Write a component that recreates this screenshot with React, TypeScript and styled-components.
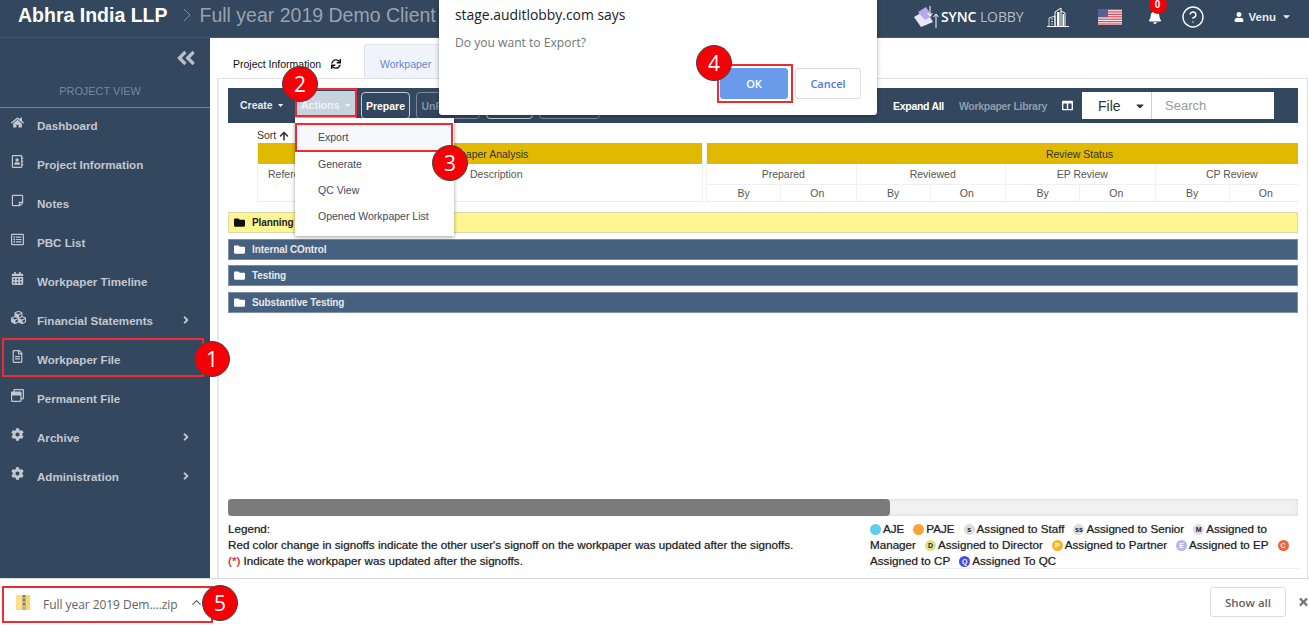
import React from "react";
import styled, {createGlobalStyle} from "styled-components";
import {
	FaAngleDoubleLeft, FaAngleRight, FaArrowUp, FaBell, FaCalendarAlt, FaCaretDown, FaCog, FaColumns, FaCubes, FaFolder,
	FaHome, FaRegAddressBook, FaRegFileAlt, FaRegListAlt, FaRegStickyNote, FaRegWindowRestore, FaSync, FaTimes, FaUser,
} from "react-icons/fa";
import {FiChevronRight, FiChevronUp, FiHelpCircle} from "react-icons/fi";

const NAVY = "#33475e";
const GOLD = "#e0b900";

const GlobalStyle = createGlobalStyle`
    html, body {
        margin: 0;
        padding: 0;
        background: white;
        overflow: hidden;
    }
    * {
        box-sizing: border-box;
    }
`
const Page = styled.div`
    position: relative;
    width: 1309px;
    height: 625px;
    overflow: hidden;
    display: flex;
    flex-direction: column;
    font-family: 'Liberation Sans', Arial, sans-serif;
    background: white;
`

/* top bar */
const Header = styled.header`
    height: 38px;
    flex: none;
    background: ${NAVY};
    border-bottom: 1px solid #46586e;
    display: flex;
    align-items: center;
    padding-left: 18px;
    color: white;
`
const Company = styled.div`
    font-size: 19.5px;
    font-weight: 700;
    white-space: nowrap;
    margin-top: -7px;
`
const Crumb = styled.div`
    font-size: 19.5px;
    color: #98a3b0;
    white-space: nowrap;
    margin: -7px 0 0 7px;
    display: flex;
    align-items: center;
    gap: 1px;
`
const HeaderRight = styled.div`
    margin-left: auto;
    display: flex;
    align-items: center;
    padding-right: 17px;
    height: 100%;
    margin-top: -4px;
`
const SyncLogo = styled.div`
    display: flex;
    align-items: center;
    margin-right: 22px;
`
const SyncText = styled.span`
    font-family: 'Open Sans', sans-serif;
    font-size: 14px;
    font-weight: 600;
    color: white;
    letter-spacing: -0.1px;
    & > span {
        font-weight: 400;
        color: #b7bec8;
    }
`
const HeaderIcon = styled.div<{ $gap: number }>`
    position: relative;
    display: flex;
    align-items: center;
    margin-right: ${props => props.$gap}px;
`
const BellBadge = styled.span`
    position: absolute;
    top: -14px;
    left: 1px;
    width: 18px;
    height: 18px;
    border-radius: 50%;
    background: #f00008;
    color: white;
    font-size: 10px;
    font-weight: 700;
    display: flex;
    align-items: center;
    justify-content: center;
`
const UserMenu = styled.div`
    display: flex;
    align-items: center;
    gap: 5px;
    font-size: 11.5px;
    font-weight: 700;
    color: #e8ebee;
`

/* page body */
const Body = styled.div`
    flex: 1;
    min-height: 0;
    display: flex;
`
const Sidebar = styled.aside`
    width: 210px;
    flex: none;
    background: ${NAVY};
    color: #c3c8cf;
`
const Collapse = styled.div`
    height: 40px;
    display: flex;
    justify-content: flex-end;
    align-items: center;
    padding: 0 13px 0 0;
    color: #b8bfc8;
    font-size: 22px;
`
const SideTitle = styled.div`
    height: 30px;
    padding: 7px 10px 0 0;
    border-bottom: 1px solid #6f8197;
    text-align: center;
    font-size: 10.9px;
    color: #74879e;
`
const NavList = styled.nav`
    display: flex;
    flex-direction: column;
`
const NavItem = styled.div`
    height: 39px;
    flex: none;
    display: flex;
    align-items: center;
    font-size: 11.6px;
    font-weight: 700;
    padding: 0 18px 5px 10px;
`
const NavIcon = styled.span`
    width: 27px;
    flex: none;
    font-size: 13px;
    display: flex;
    margin-top: -5px;
    padding-left: 1px;
`
const NavArrow = styled(FaAngleRight)`
    margin-left: auto;
    font-size: 12px;
`

/* content */
const Main = styled.main`
    flex: 1;
    min-width: 0;
    padding: 5px 1px 0 7px;
    display: flex;
    flex-direction: column;
`
const Tabs = styled.div`
    display: flex;
    height: 35px;
    flex: none;
    align-items: flex-end;
    padding-left: 1px;
`
const Tab = styled.div<{ $active?: boolean }>`
    height: ${props => props.$active ? 34 : 30}px;
    width: ${props => props.$active ? 79 : 146}px;
    display: flex;
    align-items: center;
    gap: 10px;
    font-size: 10.5px;
    padding: ${props => props.$active ? 4 : 2}px 0 0 15px;
    color: ${props => props.$active ? "#6685d6" : "#111"};
    background: ${props => props.$active ? "#f0f4fa" : "white"};
    border: ${props => props.$active ? "1px solid #dde3ea" : "none"};
    border-bottom: none;
    border-radius: 3px 3px 0 0;
    white-space: nowrap;
`
const Panel = styled.section`
    flex: 1;
    min-height: 0;
    border: 1px solid #dfe3e8;
    border-left: 2px solid #e4e9f1;
    border-bottom: none;
    padding: 9px 9px 0 9px;
    display: flex;
    flex-direction: column;
`
const Toolbar = styled.div`
    height: 35px;
    flex: none;
    background: ${NAVY};
    display: flex;
    align-items: center;
    padding-left: 13px;
    font-size: 10.5px;
    font-weight: 700;
    color: #e9ecef;
`
const ToolMenu = styled.div<{ $open?: boolean }>`
    height: 28px;
    margin-top: -1px;
    display: flex;
    align-items: center;
    gap: 5px;
    padding: 0 6px;
    width: ${props => props.$open ? 61 : 55}px;
    margin-left: ${props => props.$open ? 0 : -7}px;
    margin-right: ${props => props.$open ? 5 : 6}px;
    background: ${props => props.$open ? "#c7d2df" : "transparent"};
    color: ${props => props.$open ? "#eef2f6" : "#e9ecef"};
`
const ToolButton = styled.div<{ $width: number; $faded?: boolean }>`
    width: ${props => props.$width}px;
    height: 27px;
    margin-right: 6px;
    border: 1px solid ${props => props.$faded ? "#7c8a9b" : "#c2cad3"};
    border-radius: 4px;
    color: ${props => props.$faded ? "#8491a1" : "white"};
    display: flex;
    align-items: center;
    justify-content: center;
    overflow: hidden;
    white-space: nowrap;
`
const ToolRight = styled.div`
    margin-left: auto;
    display: flex;
    align-items: center;
    padding-right: 24px;
`
const ToolLink = styled.span<{ $muted?: boolean; $gap: number }>`
    color: ${props => props.$muted ? "#8f9cac" : "white"};
    margin-right: ${props => props.$gap}px;
    white-space: nowrap;
    letter-spacing: -0.3px;
`
const ColumnsIcon = styled(FaColumns)`
    color: white;
    font-size: 11px;
    margin-right: 9px;
`
const FileSelect = styled.div`
    width: 70px;
    height: 27px;
    background: white;
    color: #333;
    font-size: 14px;
    font-weight: 400;
    display: flex;
    align-items: center;
    justify-content: space-between;
    padding: 0 5px 0 16px;
    border-right: 1px solid #c7d2df;
`
const SearchBox = styled.div`
    width: 122px;
    height: 27px;
    background: white;
    color: #9a9a9a;
    font-size: 13px;
    font-weight: 400;
    display: flex;
    align-items: center;
    padding-left: 13px;
`

const SortRow = styled.div`
    height: 20px;
    flex: none;
    display: flex;
    align-items: flex-end;
    gap: 3px;
    padding: 0 0 2px 29px;
    font-size: 10.5px;
    color: #333;
`
const Columns = styled.div`
    display: flex;
    gap: 3px;
    padding-left: 29px;
    flex: none;
    height: 59px;
    color: #555;
    font-size: 10.5px;
`
const LeftGroup = styled.div`
    width: 446px;
    border-left: 1px solid #eef0f3;
    border-right: 1px solid #eef0f3;
    border-bottom: 1px solid #e9ecef;
`
const RightGroup = styled.div`
    flex: 1;
    min-width: 0;
    overflow: hidden;
    border-bottom: 1px solid #e9ecef;
    border-left: 1px solid #eef0f3;
`
const GoldBar = styled.div<{ $width?: number; $nudge?: number }>`
    height: 21px;
    width: ${props => props.$width ? `${props.$width}px` : "auto"};
    background: ${GOLD};
    color: #333;
    display: flex;
    align-items: center;
    justify-content: center;
    padding-left: ${props => props.$nudge ?? 0}px;
`
const LeftCells = styled.div`
    display: grid;
    grid-template-columns: 202px 1fr;
    padding: 4px 0 0 10px;
`
const ReviewGrid = styled.div`
    display: grid;
    grid-template-columns: repeat(4, 149.5px);
`
const ReviewCol = styled.div`
    border-right: 1px solid #eef0f3;
    text-align: center;
`
const ReviewTitle = styled.div`
    height: 21px;
    line-height: 21px;
    padding-left: 4px;
    border-bottom: 1px solid #eef0f3;
`
const ReviewSplit = styled.div`
    display: grid;
    grid-template-columns: 1fr 1fr;
    height: 16px;
    line-height: 17px;
    & > span:first-child {
        border-right: 1px solid #eef0f3;
    }
    & > span:last-child {
        padding-right: 2px;
    }
`
const Rows = styled.div`
    margin-top: 10px;
    display: flex;
    flex-direction: column;
    gap: 5.5px;
    flex: none;
`
const FolderRow = styled.div<{ $highlight?: boolean }>`
    height: 21px;
    display: flex;
    align-items: center;
    gap: 7px;
    padding-left: 5px;
    font-size: 10px;
    font-weight: 700;
    letter-spacing: -0.1px;
    border: 1px solid ${props => props.$highlight ? "#d9d9b0" : "#7d8ea3"};
    background: ${props => props.$highlight ? "#fff68f" : "#46607f"};
    color: ${props => props.$highlight ? "#222" : "#e6e9ed"};
`
const Scrollbar = styled.div`
    margin-top: auto;
    height: 17px;
    flex: none;
    background: #f1f1f1;
    box-shadow: inset 0 0 3px #ccc;
`
const ScrollThumb = styled.div`
    width: 662px;
    height: 100%;
    background: #7b7b7b;
    border-radius: 4px;
`
const Legend = styled.div`
    display: flex;
    flex: none;
    height: 62px;
    padding-top: 5px;
    font-size: 11.65px;
    line-height: 16px;
    color: #222;
    text-shadow: 0 0 1px rgba(0, 0, 0, 0.45);
`
const LegendLeft = styled.div`
    width: 642px;
    flex: none;
    white-space: nowrap;
`
const LegendRight = styled.div`
    flex: 1;
    border-bottom: 1px solid #eef1f5;
    height: 48px;
    padding-right: 8px;
`
const LegendLine = styled.div`
    display: block;
    white-space: nowrap;
`
const Star = styled.span`
    color: #f0141e;
`
const Key = styled.span<{ $bg: string; $fg?: string; $first?: boolean }>`
    display: inline-block;
    overflow: hidden;
    width: 11px;
    height: 11px;
    border-radius: 50%;
    background: ${props => props.$bg};
    color: ${props => props.$fg ?? "#222"};
    font-size: 7px;
    font-weight: 700;
    line-height: 11px;
    text-align: center;
    text-shadow: none;
    vertical-align: -2px;
    margin: 0 2px 0 ${props => props.$first ? 0 : 9}px;
`

/* downloads */
const DownloadBar = styled.footer`
    height: 47px;
    flex: none;
    border-top: 1px solid #d8d8d8;
    display: flex;
    align-items: center;
    padding: 0 0 0 16px;
    font-family: 'Open Sans', sans-serif;
    font-size: 12px;
    color: #5f6368;
`
const FileName = styled.span`
    margin-left: 12px;
    margin-top: 5px;
    letter-spacing: -0.05px;
`
const ChevronUp = styled(FiChevronUp)`
    margin-left: 11px;
    font-size: 15px;
`
const ShowAll = styled.div`
    margin-left: auto;
    width: 76px;
    height: 30px;
    border: 1px solid #dadce0;
    border-radius: 3px;
    display: flex;
    align-items: center;
    justify-content: center;
    font-size: 11.5px;
    font-weight: 600;
`
const CloseBtn = styled(FaTimes)`
    margin-left: 12px;
    width: 11px;
    font-size: 12px;
    color: #70757a;
    flex: none;
`

/* overlays */
const Dialog = styled.div`
    position: absolute;
    left: 439px;
    top: 0;
    width: 438px;
    height: 115px;
    background: white;
    border-radius: 0 0 3px 3px;
    box-shadow: 0 1px 4px rgba(0, 0, 0, 0.35);
    padding: 6px 16px;
    font-family: 'Open Sans', sans-serif;
`
const DialogTitle = styled.div`
    font-size: 13.9px;
    line-height: 18px;
    color: #202124;
`
const DialogText = styled.div`
    margin-top: 11px;
    font-size: 12.1px;
    line-height: 16px;
    color: #70757a;
`
const DialogActions = styled.div`
    position: absolute;
    right: 16px;
    bottom: 16px;
    display: flex;
    gap: 7px;
`
const DialogButton = styled.div<{ $primary?: boolean }>`
    width: ${props => props.$primary ? 68 : 66}px;
    height: 31px;
    border-radius: 3px;
    background: ${props => props.$primary ? "#6a9bea" : "white"};
    color: ${props => props.$primary ? "white" : "#4a7ae0"};
    border: 1px solid ${props => props.$primary ? "#6a9bea" : "#dadce0"};
    font-size: 11px;
    font-weight: 600;
    display: flex;
    align-items: center;
    justify-content: center;
`
const Dropdown = styled.div`
    position: absolute;
    left: 295px;
    top: 118px;
    width: 159px;
    height: 118px;
    background: white;
    box-shadow: 0 1px 4px rgba(0, 0, 0, 0.4);
    padding-top: 6px;
    font-size: 10.5px;
    color: #3d4a5c;
`
const DropdownItem = styled.div<{ $active?: boolean }>`
    height: 26.4px;
    display: flex;
    align-items: center;
    padding-left: 23px;
    background: ${props => props.$active ? "#f7f8fb" : "white"};
`
const Highlight = styled.div<{ $x: number; $y: number; $w: number; $h: number }>`
    position: absolute;
    left: ${props => props.$x}px;
    top: ${props => props.$y}px;
    width: ${props => props.$w}px;
    height: ${props => props.$h}px;
    border: 2px solid #ee2a33;
    pointer-events: none;
`
const Marker = styled.div<{ $x: number; $y: number }>`
    position: absolute;
    left: ${props => props.$x}px;
    top: ${props => props.$y}px;
    width: 36px;
    height: 36px;
    border-radius: 50%;
    background: #f50006;
    border: 1px solid #444;
    color: white;
    font-family: 'Open Sans', sans-serif;
    font-size: 21px;
    display: flex;
    align-items: center;
    justify-content: center;
`

const navItems = [
	{label: "Dashboard", icon: <FaHome/>},
	{label: "Project Information", icon: <FaRegAddressBook/>},
	{label: "Notes", icon: <FaRegStickyNote/>},
	{label: "PBC List", icon: <FaRegListAlt/>},
	{label: "Workpaper Timeline", icon: <FaCalendarAlt/>},
	{label: "Financial Statements", icon: <FaCubes size={15}/>, arrow: true},
	{label: "Workpaper File", icon: <FaRegFileAlt/>},
	{label: "Permanent File", icon: <FaRegWindowRestore/>},
	{label: "Archive", icon: <FaCog/>, arrow: true},
	{label: "Administration", icon: <FaCog/>, arrow: true},
]

const reviews = ["Prepared", "Reviewed", "EP Review", "CP Review"]
const folders = ["Internal COntrol", "Testing", "Substantive Testing"]
const actions = ["Export", "Generate", "QC View", "Opened Workpaper List"]

const SyncIcon = () => (
	<svg width="28" height="24" viewBox="0 0 28 24">
		<polygon points="1,12 13,5 20,17 8,22" fill="#e9e6fa"/>
		<polygon points="5,7 13,2 19,11 12,15" fill="#b5a9ec"/>
		<path d="M17 1v10M14.500 8l2.500 3 2.500-3" stroke="white" strokeWidth="1" fill="none"/>
		<path d="M23 23V9M20.500 12L23 9l2.500 3" stroke="white" strokeWidth="1" fill="none"/>
	</svg>
)

const BuildingIcon = () => (
	<svg width="24" height="22" viewBox="0 0 24 22" fill="none" stroke="white">
		<path d="M1 20.500h22" strokeWidth="1"/>
		<path d="M3 20v-8l6-2v10M5 13h2M5 15.500h2M5 18h2" strokeWidth="0.8"/>
		<path d="M9 20V6l6-4v18" strokeWidth="1"/>
		<rect x="11" y="6" width="2.500" height="14" fill="white" stroke="none"/>
		<path d="M15 5l4 2v13" strokeWidth="1"/>
		<rect x="16.500" y="8" width="1.500" height="12" fill="white" stroke="none"/>
	</svg>
)

const FlagIcon = () => (
	<svg width="24" height="16" viewBox="0 0 24 16">
		<rect width="24" height="16" fill="#f2f2f2"/>
		{[0, 1, 2, 3, 4, 5, 6].map(i => <rect key={i} y={i * 2.4} width="24" height="1.2" fill="#d8485a"/>)}
		<rect width="10" height="8" fill="#5a5f93"/>
	</svg>
)

const ZipIcon = () => (
	<svg width="15" height="17" viewBox="0 0 15 17">
		<path d="M0 1h14v15H0z" fill="#f6d66e"/>
		<path d="M0 1h9v15H0z" fill="#f9e08c"/>
		<path d="M6 1h4v15H6z" fill="#c9b67a"/>
		<path d="M7 1h2v2H7zM7 5h2v2H7zM7 9h2v2H7z" fill="#6f7480"/>
	</svg>
)

const App = () => (
	<Page>
		<GlobalStyle/>
		<Header>
			<Company>Abhra India LLP</Company>
			<Crumb><FiChevronRight size={24} color="#7f8b99" strokeWidth={1}/>Full year 2019 Demo Client</Crumb>
			<HeaderRight>
				<SyncLogo>
					<SyncIcon/>
					<SyncText>SYNC <span>LOBBY</span></SyncText>
				</SyncLogo>
				<HeaderIcon $gap={28}><BuildingIcon/></HeaderIcon>
				<HeaderIcon $gap={26}><FlagIcon/></HeaderIcon>
				<HeaderIcon $gap={19}>
					<FaBell size={14} color="white"/>
					<BellBadge>0</BellBadge>
				</HeaderIcon>
				<HeaderIcon $gap={29}><FiHelpCircle size={24} color="white" strokeWidth={1.4}/></HeaderIcon>
				<UserMenu>
					<FaUser size={10} color="white"/>
					Venu
					<FaCaretDown size={11}/>
				</UserMenu>
			</HeaderRight>
		</Header>
		<Body>
			<Sidebar>
				<Collapse><FaAngleDoubleLeft/></Collapse>
				<SideTitle>PROJECT VIEW</SideTitle>
				<NavList>
					{navItems.map(item => (
						<NavItem key={item.label}>
							<NavIcon>{item.icon}</NavIcon>
							{item.label}
							{item.arrow && <NavArrow/>}
						</NavItem>
					))}
				</NavList>
			</Sidebar>
			<Main>
				<Tabs>
					<Tab>Project Information <FaSync size={10}/></Tab>
					<Tab $active>Workpaper</Tab>
				</Tabs>
				<Panel>
					<Toolbar>
						<ToolMenu>Create <FaCaretDown size={12}/></ToolMenu>
						<ToolMenu $open>Actions <FaCaretDown size={12}/></ToolMenu>
						<ToolButton $width={49}>Prepare</ToolButton>
						<ToolButton $width={64} $faded>UnPrepare</ToolButton>
						<ToolButton $width={47}>Review</ToolButton>
						<ToolButton $width={61} $faded>UnReview</ToolButton>
						<ToolRight>
							<ToolLink $gap={16}>Collapse All</ToolLink>
							<ToolLink $gap={15}>Expand All</ToolLink>
							<ToolLink $gap={15} $muted>Workpaper Library</ToolLink>
							<ColumnsIcon/>
							<FileSelect>File <FaCaretDown size={12}/></FileSelect>
							<SearchBox>Search</SearchBox>
						</ToolRight>
					</Toolbar>
					<SortRow>Sort <FaArrowUp size={10}/></SortRow>
					<Columns>
						<LeftGroup>
							<GoldBar $nudge={4}>Workpaper Analysis</GoldBar>
							<LeftCells>
								<span>Reference</span>
								<span>Description</span>
							</LeftCells>
						</LeftGroup>
						<RightGroup>
							<GoldBar $width={745}>Review Status</GoldBar>
							<ReviewGrid>
								{reviews.map(review => (
									<ReviewCol key={review}>
										<ReviewTitle>{review}</ReviewTitle>
										<ReviewSplit><span>By</span><span>On</span></ReviewSplit>
									</ReviewCol>
								))}
							</ReviewGrid>
						</RightGroup>
					</Columns>
					<Rows>
						<FolderRow $highlight><FaFolder size={11} color="#111"/>Planning</FolderRow>
						{folders.map(folder => (
							<FolderRow key={folder}><FaFolder size={11} color="white"/>{folder}</FolderRow>
						))}
					</Rows>
					<Scrollbar><ScrollThumb/></Scrollbar>
					<Legend>
						<LegendLeft>
							<LegendLine>Legend:</LegendLine>
							<LegendLine>Red color change in signoffs indicate the other user's signoff on the workpaper was updated after the signoffs.</LegendLine>
							<LegendLine><Star>(*)</Star> Indicate the workpaper was updated after the signoffs.</LegendLine>
						</LegendLeft>
						<LegendRight>
							<LegendLine>
								<Key $first $bg="#62cdf2"/><span>AJE</span>
								<Key $bg="#f9a535"/><span>PAJE</span>
								<Key $bg="#dcdcdc">s</Key><span>Assigned to Staff</span>
								<Key $bg="#dcdcdc">ss</Key><span>Assigned to Senior</span>
								<Key $bg="#dcdcf0">M</Key><span>Assigned to</span>
							</LegendLine>
							<LegendLine>
								<span>Manager</span>
								<Key $bg="#dde08a">D</Key><span>Assigned to Director</span>
								<Key $bg="#f9b326" $fg="white">P</Key><span>Assigned to Partner</span>
								<Key $bg="#b5b5f5" $fg="white">E</Key><span>Assigned to EP</span>
								<Key $bg="#f4623a" $fg="white">C</Key>
							</LegendLine>
							<LegendLine>
								<span>Assigned to CP</span>
								<Key $bg="#4a4ae8" $fg="white">Q</Key><span>Assigned To QC</span>
							</LegendLine>
						</LegendRight>
					</Legend>
				</Panel>
			</Main>
		</Body>
		<DownloadBar>
			<ZipIcon/>
			<FileName>Full year 2019 Dem....zip</FileName>
			<ChevronUp/>
			<ShowAll>Show all</ShowAll>
			<CloseBtn/>
		</DownloadBar>

		<Dropdown>
			{actions.map(action => (
				<DropdownItem key={action} $active={action === "Export"}>{action}</DropdownItem>
			))}
		</Dropdown>
		<Dialog>
			<DialogTitle>stage.auditlobby.com says</DialogTitle>
			<DialogText>Do you want to Export?</DialogText>
			<DialogActions>
				<DialogButton $primary>OK</DialogButton>
				<DialogButton>Cancel</DialogButton>
			</DialogActions>
		</Dialog>

		<Highlight $x={2} $y={338} $w={202} $h={39}/>
		<Highlight $x={295} $y={88} $w={62} $h={29}/>
		<Highlight $x={295} $y={123} $w={158} $h={29}/>
		<Highlight $x={717} $y={64} $w={76} $h={39}/>
		<Highlight $x={2} $y={586} $w={211} $h={37}/>
		<Marker $x={194} $y={341}>1</Marker>
		<Marker $x={282} $y={66}>2</Marker>
		<Marker $x={432} $y={145}>3</Marker>
		<Marker $x={696} $y={45}>4</Marker>
		<Marker $x={202} $y={585}>5</Marker>
	</Page>
)

export default App
